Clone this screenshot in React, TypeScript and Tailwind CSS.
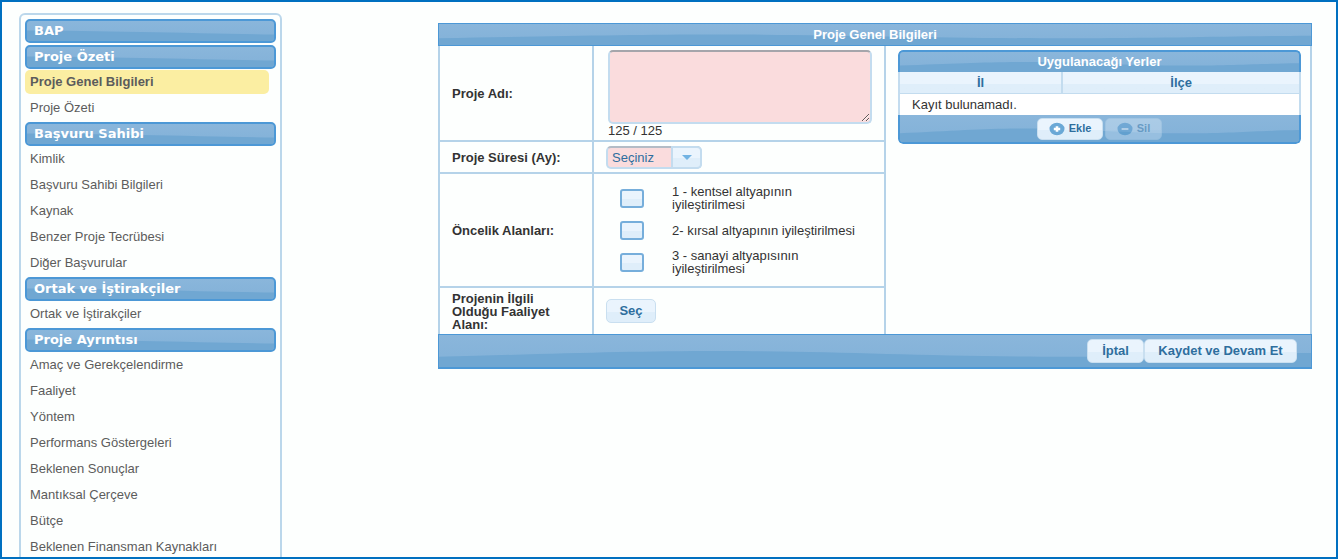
import React from "react";

type Section = { title: string; items: string[] };

const sections: Section[] = [
  { title: "BAP", items: [] },
  { title: "Proje Özeti", items: ["Proje Genel Bilgileri", "Proje Özeti"] },
  {
    title: "Başvuru Sahibi",
    items: ["Kimlik", "Başvuru Sahibi Bilgileri", "Kaynak", "Benzer Proje Tecrübesi", "Diğer Başvurular"],
  },
  { title: "Ortak ve İştirakçiler", items: ["Ortak ve İştirakçiler"] },
  {
    title: "Proje Ayrıntısı",
    items: [
      "Amaç ve Gerekçelendirme",
      "Faaliyet",
      "Yöntem",
      "Performans Göstergeleri",
      "Beklenen Sonuçlar",
      "Mantıksal Çerçeve",
      "Bütçe",
      "Beklenen Finansman Kaynakları",
    ],
  },
];

const activeItem = "Proje Genel Bilgileri";

const priorities = [
  "1 - kentsel altyapının iyileştirilmesi",
  "2- kırsal altyapının iyileştirilmesi",
  "3 - sanayi altyapısının iyileştirilmesi",
];

const glossShapes = {
  falling: "M0 48 C30 50 70 62 100 68 V100 H0 Z",
  wave: "M0 68 C14 58 22 50 32 50 C46 50 56 68 72 68 C84 68 90 58 100 56 V100 H0 Z",
};

function Gloss({ shape }: { shape: keyof typeof glossShapes }) {
  return (
    <svg
      aria-hidden="true"
      viewBox="0 0 100 100"
      preserveAspectRatio="none"
      className="pointer-events-none absolute inset-0 h-full w-full"
    >
      <path d={glossShapes[shape]} fill="#70a7d2" />
    </svg>
  );
}

const bar = "relative overflow-hidden border-[#4c98d6] bg-linear-to-b from-[#8ab6db] to-[#82b1d8]";
const softFill = "bg-linear-to-b from-[#eaf4fd] from-55% to-[#dfeefa] to-55%";
const softButton = `flex items-center justify-center rounded-[5px] border border-[#c9dff0] font-bold text-[#2e6e9e] ${softFill}`;

function Sidebar() {
  return (
    <nav className="w-[263px] shrink-0 self-start rounded-md border-2 border-[#bbd7eb] bg-[#fdfffe] p-1 pb-10">
      {sections.map((section) => (
        <section key={section.title} className="mb-0.5">
          <h2
            className={`${bar} flex h-6 items-center rounded-[5px] border-2 px-[7px] font-['DejaVu_Sans'] text-[13px] font-bold text-white`}
          >
            <Gloss shape="falling" />
            <span className="relative">{section.title}</span>
          </h2>
          {section.items.length > 0 && (
            <ul className="mt-px flex flex-col gap-0.5">
              {section.items.map((item) => (
                <li key={item}>
                  <a
                    href="#"
                    className={
                      item === activeItem
                        ? "mr-[7px] flex h-6 items-center rounded-[5px] bg-[#fbeea2] px-[5px] font-bold text-[#5c5c5c]"
                        : "mr-[7px] flex h-6 items-center px-[5px] text-[#5c5c5c]"
                    }
                  >
                    {item}
                  </a>
                </li>
              ))}
            </ul>
          )}
        </section>
      ))}
    </nav>
  );
}

function Places() {
  return (
    <div className="overflow-hidden rounded-[5px]">
      <table className="w-full border-separate border-spacing-0">
        <caption className={`${bar} h-[22px] rounded-t-[5px] border-2 border-b-0 leading-5 font-bold text-white`}>
          <Gloss shape="wave" />
          <span className="relative">Uygulanacağı Yerler</span>
        </caption>
        <thead>
          <tr className="h-[22px] text-[#2e6e9e]">
            <th className={`${softFill} w-[41%] border-x-2 border-b border-[#c3dcef] p-0`}>İl</th>
            <th className={`${softFill} border-r-2 border-b border-[#c3dcef] p-0`}>İlçe</th>
          </tr>
        </thead>
        <tbody>
          <tr className="h-[21px] bg-white">
            <td colSpan={2} className="border-x-2 border-[#c3dcef] px-3 py-0 text-[#333]">
              Kayıt bulunamadı.
            </td>
          </tr>
        </tbody>
      </table>
      <div
        className={`${bar} flex h-[29px] items-center justify-center gap-0.5 rounded-b-[5px] border-2 border-t-0`}
      >
        <Gloss shape="wave" />
        <button type="button" className={`${softButton} relative h-[22px] w-[66px] gap-1 text-[11px]`}>
          <svg viewBox="0 0 16 16" className="size-4" aria-hidden="true">
            <ellipse cx="8" cy="8" rx="7.5" ry="6.2" fill="#6aa8d6" />
            <path d="M8 5.2v5.6M4.8 8h6.4" stroke="#fff" strokeWidth="2.6" />
          </svg>
          Ekle
        </button>
        <button
          type="button"
          disabled
          className={`${softButton} relative h-[22px] w-[57px] gap-1 text-[11px] opacity-35`}
        >
          <svg viewBox="0 0 16 16" className="size-4" aria-hidden="true">
            <ellipse cx="8" cy="8" rx="7.5" ry="6.2" fill="#4a94cc" />
            <path d="M4.6 8h6.8" stroke="#fff" strokeWidth="2" />
          </svg>
          Sil
        </button>
      </div>
    </div>
  );
}

function ProjectForm() {
  const label = "flex items-center border-r-2 border-[#b5d3e9] px-3 font-bold leading-[13px]";
  const field = "border-r-2 border-b-2 border-[#b5d3e9]";
  return (
    <form className="min-w-0 flex-1 self-start text-[#333]" onSubmit={(e) => e.preventDefault()}>
      <h1 className={`${bar} h-[23px] border text-center leading-[21px] font-bold text-white`}>
        <Gloss shape="wave" />
        <span className="relative">Proje Genel Bilgileri</span>
      </h1>
      <div className="flex border-x-2 border-[#b5d3e9]">
        <div className="grid shrink-0 grid-cols-[154px_292px] grid-rows-[96px_32px_114px_46px]">
          <label htmlFor="ad" className={`${label} border-b-2`}>
            Proje Adı:
          </label>
          <div className={`${field} px-3 pt-1 pl-3.5`}>
            <textarea
              id="ad"
              className="block h-[74px] w-full resize rounded-[5px] border-2 border-[#c3dcef] border-t-[#a5a5ab] bg-[#fadcdd] outline-none"
            />
            <p className="leading-[14px]">125 / 125</p>
          </div>

          <label htmlFor="sure" className={`${label} border-b-2`}>
            Proje Süresi (Ay):
          </label>
          <div className={`${field} flex items-center px-3`}>
            <div className="relative w-24">
              <select
                id="sure"
                className="h-[23px] w-full appearance-none rounded-[5px] border-2 border-[#c3dcef] border-t-[#b4bcc6] bg-[#fadcdd] px-1 text-[#2e6e9e] outline-none"
              >
                <option>Seçiniz</option>
              </select>
              <span
                className={`${softFill} pointer-events-none absolute inset-y-0 right-0 flex w-[31px] items-center justify-center rounded-r-[5px] border-2 border-[#c3dcef]`}
              >
                <svg viewBox="0 0 10 5" className="h-[5px] w-[10px]" aria-hidden="true">
                  <path d="M0 0h10L5 5z" fill="#72b3e3" />
                </svg>
              </span>
            </div>
          </div>

          <div className={`${label} border-b-2`} id="oncelik">
            Öncelik Alanları:
          </div>
          <div
            role="group"
            aria-labelledby="oncelik"
            className={`${field} grid grid-rows-3 content-center py-2`}
          >
            {priorities.map((text) => (
              <label key={text} className="flex h-8 items-center pl-[26px] leading-[13px]">
                <input
                  type="checkbox"
                  className={`${softFill} h-[19px] w-6 shrink-0 appearance-none rounded-[3px] border-2 border-[#76aedb]`}
                />
                <span className="ml-7 w-[188px]">{text}</span>
              </label>
            ))}
          </div>

          <label htmlFor="faaliyet" className={label}>
            <span className="w-[110px]">Projenin İlgili Olduğu Faaliyet Alanı:</span>
          </label>
          <div className="flex items-center border-r-2 border-[#b5d3e9] px-3">
            <button id="faaliyet" type="button" className={`${softButton} h-6 w-[50px]`}>
              Seç
            </button>
          </div>
        </div>
        <div className="min-w-0 flex-1 pt-1 pr-[9px] pl-3">
          <Places />
        </div>
      </div>
      <div className={`${bar} flex h-[35px] items-center justify-end border border-b-2 pr-3.5`}>
        <Gloss shape="wave" />
        <button type="button" className={`${softButton} relative h-6 w-[57px]`}>
          İptal
        </button>
        <button type="button" className={`${softButton} relative h-6 w-[153px]`}>
          Kaydet ve Devam Et
        </button>
      </div>
    </form>
  );
}

export default function App() {
  return (
    <div className="flex h-screen overflow-hidden border-2 border-[#0070c0] bg-[#fdfffe] pr-6 pl-[17px] font-['Liberation_Sans',sans-serif] text-[13px]">
      <div className="pt-[11px]">
        <Sidebar />
      </div>
      <main className="ml-[156px] flex min-w-0 flex-1 pt-[21px]">
        <ProjectForm />
      </main>
    </div>
  );
}
